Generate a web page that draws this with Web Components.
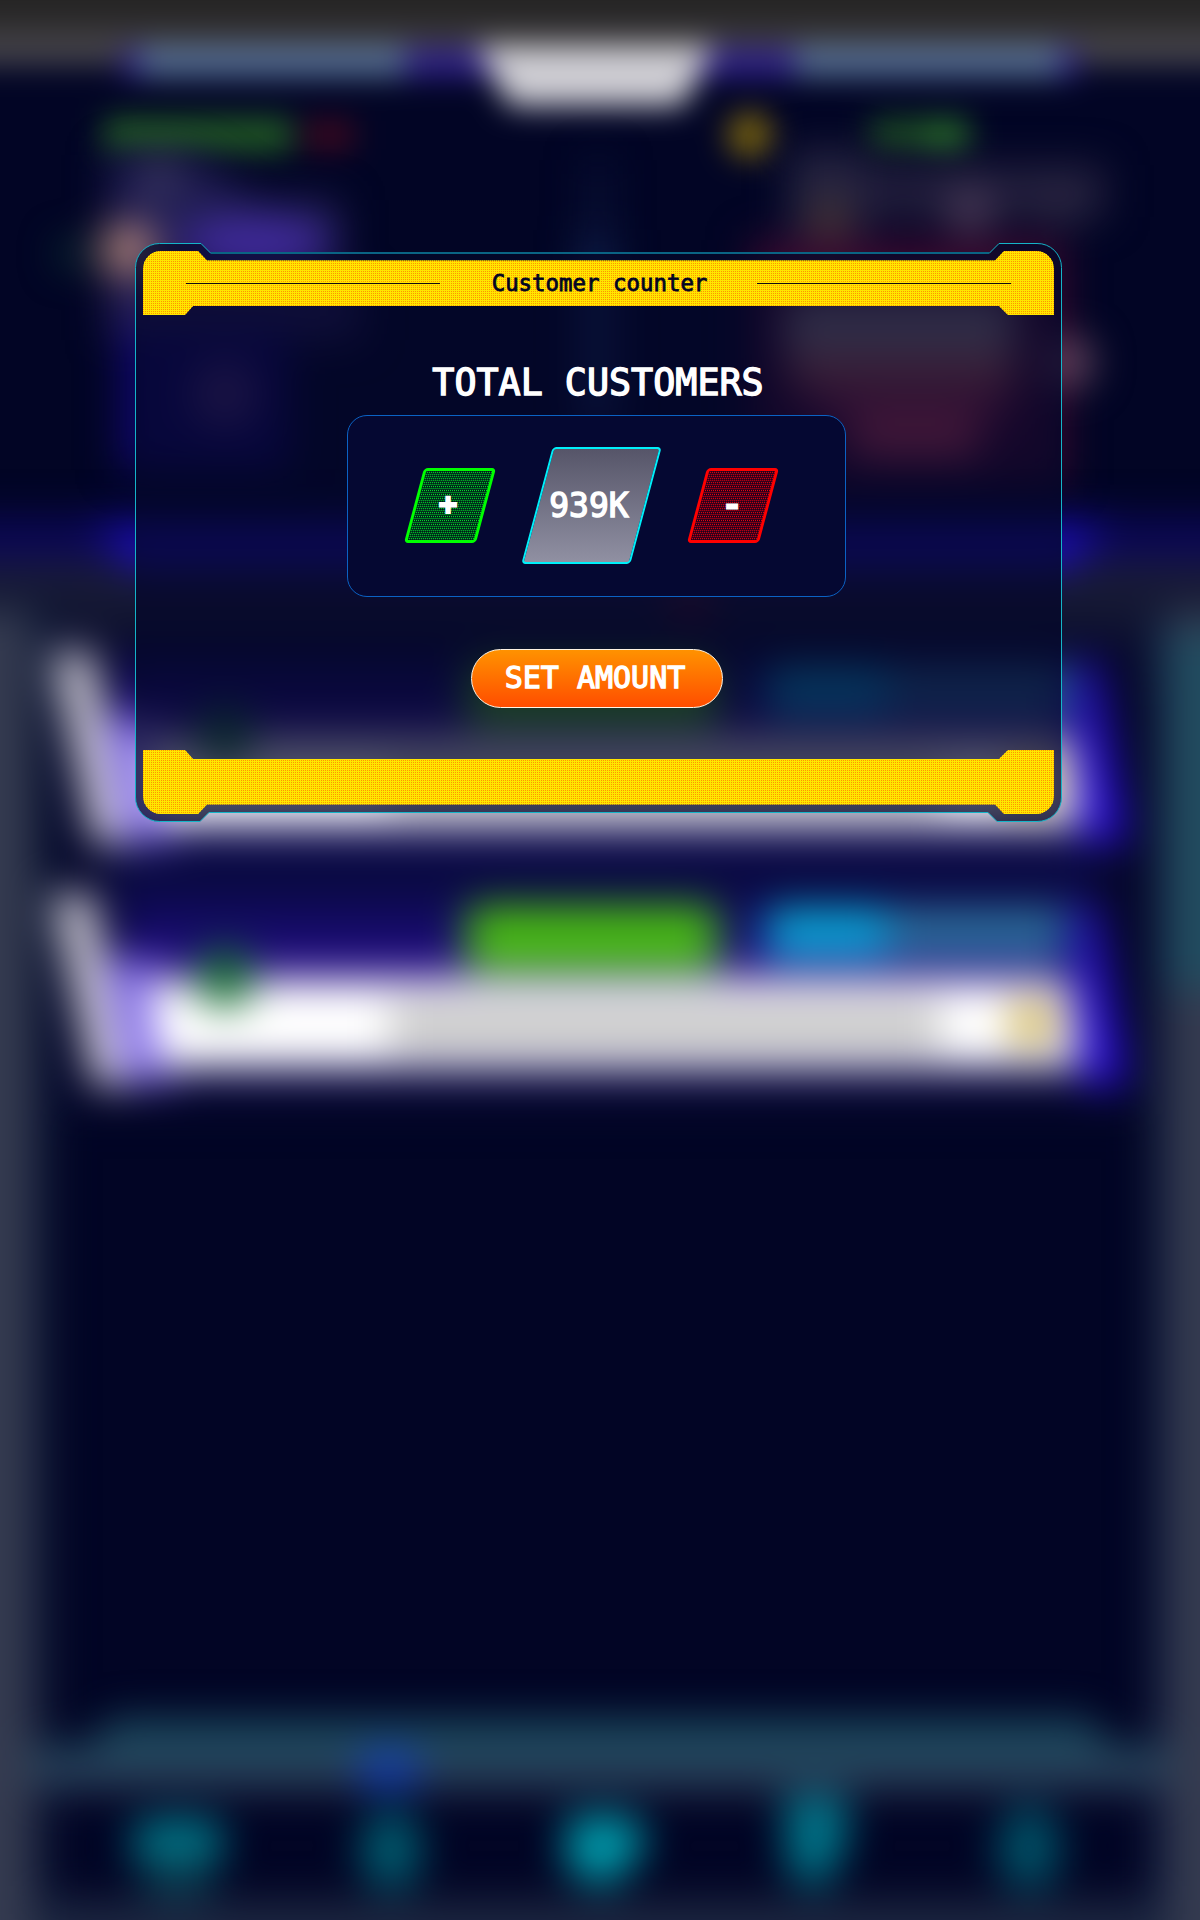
<!DOCTYPE html>
<html lang="en">
<head>
<meta charset="utf-8">
<title>Customer counter</title>
<style>
html,body{margin:0;background:#020525}
body{width:1200px;height:1920px;overflow:hidden;font-family:"DejaVu Sans Mono","Liberation Mono",monospace}
</style>
</head>
<body>
<game-screen>
  <blurred-scene slot="scene"></blurred-scene>
  <neon-dialog heading="Customer counter">
    <amount-counter label="TOTAL CUSTOMERS">
      <skew-tile tone="plus">+</skew-tile>
      <skew-tile tone="value">939K</skew-tile>
      <skew-tile tone="minus">-</skew-tile>
    </amount-counter>
    <pill-button>SET AMOUNT</pill-button>
  </neon-dialog>
</game-screen>
<script>
const define = (name, html) => customElements.define(name, class extends HTMLElement {
  constructor() {
    super();
    this.attachShadow({ mode: "open" }).innerHTML =
      html.replace(/\{(\w+)\}/g, (_, key) => this.getAttribute(key) || "");
  }
});

define("game-screen", `
<style>
:host{display:block;position:relative;width:1200px;height:1920px;overflow:hidden}
.scene{position:absolute;inset:0}
main{position:relative;padding:243px 138px 0 135px}
</style>
<div class="scene"><slot name="scene"></slot></div>
<main><slot></slot></main>`);

/* One quest row: slanted tab, purple header, action pills and a pale body */
const questRow = y => `
<g transform="translate(0 ${y})">
  <path d="M120 10H1070L1100 190H135Z" fill="#120a62"/>
  <path d="M120 55H1060V100H130Z" fill="#2b138a"/>
  <path d="M108 66L150 66L175 192H126Z" fill="#7c64ea"/>
  <path d="M52 2H92L128 194H94Z" fill="#d4d0dc"/>
  <path d="M1078 10H1094L1126 194H1082Z" fill="#2d10dc"/>
  <path d="M146 88H1068L1078 176H160Z" fill="#fff"/>
  <path d="M390 108H940V162H390Z" fill="#cacaca"/>
  <rect x="466" y="14" width="252" height="64" rx="14" fill="#48ba14"/>
  <rect x="766" y="16" width="122" height="50" rx="12" fill="#0aa4d4"/>
  <rect x="888" y="16" width="178" height="50" fill="#2a6c98"/>
  <circle cx="225" cy="86" r="30" fill="#1a7034"/>
  <circle cx="1032" cy="131" r="25" fill="#cfb660"/>
</g>`;

define("blurred-scene", `
<style>:host{display:block}svg{display:block}</style>
<svg width="1200" height="1920" viewBox="0 0 1200 1920">
<defs>
  <filter id="b" filterUnits="userSpaceOnUse" x="-100" y="-100" width="1400" height="2120" color-interpolation-filters="sRGB"><feGaussianBlur stdDeviation="20"/></filter>
  <filter id="t" filterUnits="userSpaceOnUse" x="-100" y="-100" width="1400" height="2120" color-interpolation-filters="sRGB"><feGaussianBlur stdDeviation="15"/></filter>
  <linearGradient id="top" x1="0" y1="0" x2="0" y2="1"><stop offset="0" stop-color="#242322"/><stop offset=".68" stop-color="#252424"/><stop offset="1" stop-color="#54525a"/></linearGradient>
  <linearGradient id="mist" x1="0" y1="0" x2="0" y2="1"><stop offset="0" stop-color="#1c1e38"/><stop offset="1" stop-color="#060b2a"/></linearGradient>
  <linearGradient id="dock" x1="0" y1="0" x2="0" y2="1"><stop offset="0" stop-color="#15465b"/><stop offset=".5" stop-color="#23485e"/><stop offset="1" stop-color="#2a3350"/></linearGradient>
</defs>
<rect width="1200" height="1920" fill="#020525"/>
<g filter="url(#t)">
  <rect x="-100" y="-100" width="1400" height="2120" fill="#020525"/>
  <rect x="-100" y="-100" width="1400" height="164" fill="url(#top)"/>
  <rect x="122" y="48" width="956" height="29" fill="#30228a"/>
  <rect x="140" y="46" width="265" height="31" fill="#536c92"/>
  <rect x="795" y="46" width="265" height="31" fill="#536c92"/>
  <path d="M476 46H714L682 106H510Z" fill="#cfced4"/>

  <rect x="104" y="118" width="188" height="34" fill="#205823"/>
  <rect x="304" y="120" width="50" height="30" fill="#3c081e"/>
  <circle cx="750" cy="135" r="23" fill="#75600f"/>
  <rect x="870" y="118" width="100" height="34" fill="#194622"/>
  <ellipse cx="945" cy="137" rx="25" ry="18" fill="#246428"/>
</g>
<g filter="url(#b)">
  <path d="M110 155H190L260 200H340V265H110Z" fill="#201d52"/>
  <circle cx="160" cy="174" r="16" fill="#4a4868"/>
  <ellipse cx="255" cy="244" rx="76" ry="28" fill="#402a9c"/>
  <circle cx="128" cy="250" r="28" fill="#b0847c"/>
  <circle cx="72" cy="254" r="12" fill="#104a38"/>
  <rect x="110" y="280" width="250" height="60" fill="#28205c"/>
  <rect x="120" y="330" width="170" height="140" fill="#0f0768"/>
  <circle cx="225" cy="394" r="34" fill="#4c3080"/>
  <rect x="582" y="230" width="30" height="200" fill="#163468"/>
  <rect x="588" y="160" width="20" height="110" fill="#0a1238"/>

  <rect x="750" y="240" width="315" height="245" fill="#38082e"/>
  <rect x="790" y="150" width="75" height="90" fill="#262440"/>
  <rect x="860" y="165" width="245" height="52" fill="#221e3c"/>
  <ellipse cx="970" cy="210" rx="24" ry="24" fill="#4a3c58"/>
  <ellipse cx="1060" cy="200" rx="34" ry="26" fill="#282440"/>
  <circle cx="829" cy="219" r="14" fill="#604020"/>
  <rect x="785" y="296" width="230" height="62" fill="#91848c"/>
  <rect x="790" y="352" width="225" height="34" fill="#b85c5c"/>
  <rect x="810" y="386" width="200" height="38" fill="#801c44"/>
  <rect x="852" y="406" width="126" height="52" fill="#c83c5c"/>
  <circle cx="1068" cy="362" r="24" fill="#735068"/>
</g>
<g filter="url(#b)">
  <rect x="-100" y="518" width="1400" height="42" fill="#0b0758"/>
  <rect x="-100" y="560" width="1400" height="130" fill="url(#mist)"/>
  <path d="M95 525H1105L1070 568H130Z" fill="#1a0cb8"/>
  <circle cx="690" cy="602" r="20" fill="#5a1020"/>
  <rect x="60" y="640" width="1080" height="470" fill="#05072c"/>
  <rect x="110" y="830" width="980" height="80" fill="#0a0a42"/>
  <rect x="-100" y="600" width="154" height="1500" fill="#0c1634"/>
  <rect x="-100" y="610" width="132" height="1500" fill="#353b50"/>
  <rect x="1150" y="610" width="150" height="1500" fill="#121e3e"/>
  <rect x="1168" y="610" width="132" height="1500" fill="#353b50"/>
  <rect x="1166" y="630" width="134" height="360" fill="#224c60"/>
  ${questRow(650)}
  ${questRow(892)}

  <path d="M112 1718H1088L1112 1746H1170V1792H30V1746H88Z" fill="url(#dock)"/>
  <rect x="30" y="1900" width="1140" height="120" fill="#1c2640"/>
  <ellipse cx="389" cy="1770" rx="34" ry="22" fill="#173fa8"/>
  <rect x="133" y="1820" width="90" height="46" rx="18" fill="#008090"/>
  <rect x="145" y="1855" width="65" height="42" fill="#083c50"/>
  <ellipse cx="391" cy="1850" rx="31" ry="40" fill="#005a6e"/>
  <path d="M568 1816H632L648 1846L605 1888L566 1868Z" fill="#009cac"/>
  <path d="M784 1796H846L847 1845L820 1890L788 1872Z" fill="#00768a"/>
  <ellipse cx="1029" cy="1848" rx="32" ry="42" fill="#005066"/>
</g>
</svg>`);

define("neon-dialog", `
<style>
:host{display:block;position:relative;width:927px;height:579px}
.frame{position:absolute;left:0;top:0}
.box{position:relative;box-sizing:border-box;height:579px;padding:8px;display:flex;flex-direction:column}
.bar{flex:none;height:64px;background:
  linear-gradient(90deg,transparent 1px,#ffe600 1px) 0 0/2px 2px,linear-gradient(#ff9400 1px,#ffe600 1px) 0 0/2px 2px}
header{display:flex;align-items:center;justify-content:center;box-sizing:border-box;padding:0 43px;
 clip-path:path("M0 18A18 18 0 0 1 18 0H55L64 9.500H852L861 0H893A18 18 0 0 1 911 18V64H865L856 55H50L42 64H0Z")}
header i{height:1px;width:254px;background:#150b12;flex:none}
h2{flex:1;margin:0;padding-left:2px;text-align:center;color:#020523;font:400 22.4px/30px "DejaVu Sans Mono",monospace;-webkit-text-stroke:.8px #020523;white-space:pre}
.bar.foot{clip-path:path("M0 0H42L50 9H856L865 0H911V46A18 18 0 0 1 893 64H861L852 54.5H64L55 64H18A18 18 0 0 1 0 46Z")}
section{flex:1;display:flex;flex-direction:column;align-items:center}
</style>
<svg class="frame" width="927" height="579" viewBox="0 0 927 579">
<path d="M.5 24.5A24 24 0 0 1 24.500 .5H66L76 10.500H854L864 .5H902A24 24 0 0 1 926.500 24.500V554A24 24 0 0 1 902 578.500H862L853 569.500H74L65 578.500H24.500A24 24 0 0 1 .5 554Z" fill="#04072a" fill-opacity=".7" stroke="#14b4c8"/>
<path d="M76 10H854" stroke="#0a6484" stroke-width="2"/>
</svg>
<div class="box">
<header class="bar"><i></i><h2>{heading}</h2><i></i></header>
<section><slot></slot></section>
<div class="bar foot"></div>
</div>`);

define("amount-counter", `
<style>
:host{display:flex;flex-direction:column;align-items:center;margin-top:46px;width:500px}
h1{margin:0 1px 0 0;text-align:center;height:53.5px;color:#fff;font:400 36.7px/44px "DejaVu Sans Mono",monospace;-webkit-text-stroke:1.4px #fff;white-space:pre}
.panel{box-sizing:border-box;width:499px;height:182px;margin-right:5px;border:1px solid #0b62c4;border-radius:20px;background:#050832;display:flex;align-items:center;justify-content:center;gap:51px;padding:0 10px 1px 0}
</style>
<h1>{label}</h1>
<div class="panel"><slot></slot></div>`);

define("skew-tile", `
<style>
:host{display:flex;align-items:center;justify-content:center;box-sizing:border-box;width:72px;height:75px;position:relative;color:#fff;font:400 33px/40px "DejaVu Sans Mono",monospace}
.face{position:absolute;inset:0;box-sizing:border-box;transform:skewX(-15deg);border:3px solid #0f0;border-radius:4px}
:host([tone=plus]) .face,:host([tone=minus]) .face{background:
 linear-gradient(90deg,var(--base) 1px,transparent 1px) 0 0/2px 2px,linear-gradient(var(--base) 1px,var(--dot) 1px) 0 0/2px 2px}
:host([tone=plus]){--base:#00141a;--dot:#00e828;font-size:30px;font-weight:700;-webkit-text-stroke:2px #fff}
:host([tone=minus]){--base:#18001c;--dot:#f00010;font-size:36px;font-weight:700;-webkit-text-stroke:1px #fff}
:host([tone=minus]) .face{border-color:#f00}
:host([tone=value]){width:109px;height:117px}
:host([tone=value]) .face{border:2px solid #00f0fa;background:linear-gradient(#565569,#9090a2)}
span{position:relative;margin:1px 0 0 -4px}
:host([tone=value]) span{-webkit-text-stroke:1.4px #fff}
:host([tone=plus]) span{margin:0 0 2px -3px}
:host([tone=minus]) span{margin:0 0 1px -1px}
</style>
<div class="face"></div><span><slot></slot></span>`);

define("pill-button", `
<style>
:host{display:block;margin:52.5px 3px 0 0}
button{display:block;box-sizing:border-box;width:252px;height:59px;padding:0 4px 1px 0;border:1px solid #fff4e4;border-radius:30px;background:linear-gradient(#ff9200,#ff4d00);color:#fff;font:400 30px/40px "DejaVu Sans Mono",monospace;-webkit-text-stroke:1.3px #fff;white-space:pre}
</style>
<button><slot></slot></button>`);
</script>
</body>
</html>
